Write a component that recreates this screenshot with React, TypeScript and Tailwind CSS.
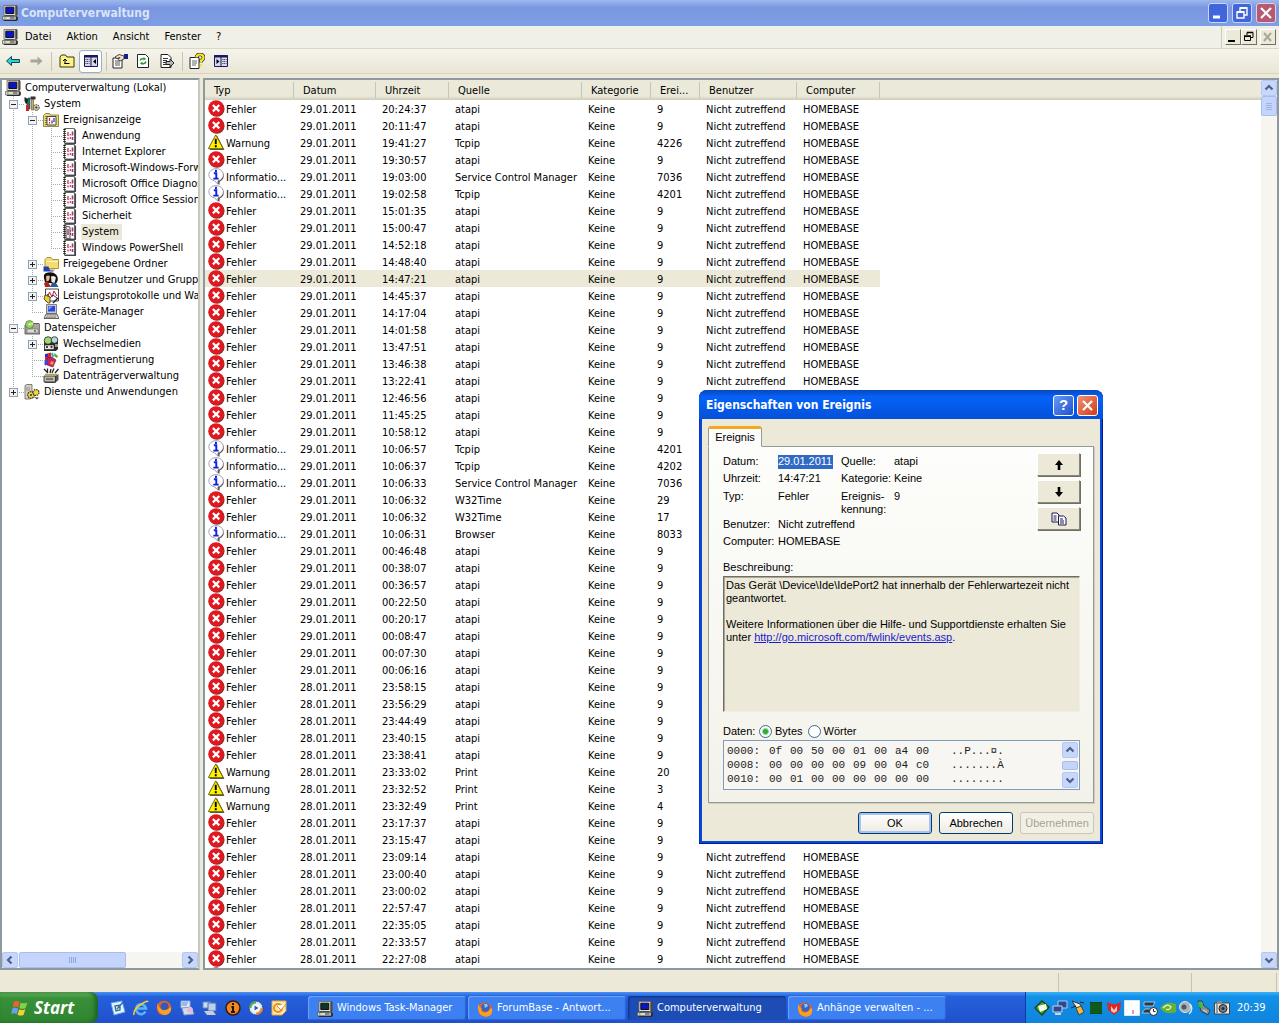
import { useState, type ReactNode } from "react";
import clsx from "clsx";

type Kind = "Fehler" | "Warnung" | "Information";

type EventRow = {
    kind: Kind;
    date: string;
    time: string;
    source: string;
    id: string;
};

const kinds: Record<string, Kind> = { F: "Fehler", W: "Warnung", I: "Information" };

// kind, time, source, id
const log29 = `F 20:24:37 atapi 9
F 20:11:47 atapi 9
W 19:41:27 Tcpip 4226
F 19:30:57 atapi 9
I 19:03:00 Service_Control_Manager 7036
I 19:02:58 Tcpip 4201
F 15:01:35 atapi 9
F 15:00:47 atapi 9
F 14:52:18 atapi 9
F 14:48:40 atapi 9
F 14:47:21 atapi 9
F 14:45:37 atapi 9
F 14:17:04 atapi 9
F 14:01:58 atapi 9
F 13:47:51 atapi 9
F 13:46:38 atapi 9
F 13:22:41 atapi 9
F 12:46:56 atapi 9
F 11:45:25 atapi 9
F 10:58:12 atapi 9
I 10:06:57 Tcpip 4201
I 10:06:37 Tcpip 4202
I 10:06:33 Service_Control_Manager 7036
F 10:06:32 W32Time 29
F 10:06:32 W32Time 17
I 10:06:31 Browser 8033
F 00:46:48 atapi 9
F 00:38:07 atapi 9
F 00:36:57 atapi 9
F 00:22:50 atapi 9
F 00:20:17 atapi 9
F 00:08:47 atapi 9
F 00:07:30 atapi 9
F 00:06:16 atapi 9`;

const log28 = `F 23:58:15 atapi 9
F 23:56:29 atapi 9
F 23:44:49 atapi 9
F 23:40:15 atapi 9
F 23:38:41 atapi 9
W 23:33:02 Print 20
W 23:32:52 Print 3
W 23:32:49 Print 4
F 23:17:37 atapi 9
F 23:15:47 atapi 9
F 23:09:14 atapi 9
F 23:00:40 atapi 9
F 23:00:02 atapi 9
F 22:57:47 atapi 9
F 22:35:05 atapi 9
F 22:33:57 atapi 9
F 22:27:08 atapi 9
F 22:25:51 atapi 9`;

const parse = (log: string, date: string): EventRow[] =>
    log.split("\n").map((line) => {
        const [k, time, source, id] = line.split(" ");
        return { kind: kinds[k], date, time, source: source.replace(/_/g, " "), id };
    });

const events = [...parse(log29, "29.01.2011"), ...parse(log28, "28.01.2011")];

/* ---------- icons ---------- */

const Pix = ({ children, className = "size-4" }: { children: ReactNode; className?: string }) => (
    <svg viewBox="0 0 16 16" className={clsx("block shrink-0", className)} aria-hidden="true">
        {children}
    </svg>
);

const ComputerIcon = ({ className, screen = "#0a14c8" }: { className?: string; screen?: string }) => (
    <Pix className={className}>
        <path d="M13 0h1.5l1 1v9l-1.5 1h-1z" fill="#4a483f" />
        <path d="M2 0.5h11.5v10h-11.5z" fill="#e0dcd0" stroke="#6a675c" strokeWidth="0.8" />
        <path d="M3.8 2.2h8v6.3h-8z" fill={screen} stroke="#111" strokeWidth="1" />
        <path d="M3 11h9" stroke="#222" />
        <path d="M14 11l1.8 1v3l-1.5 1h-12l-1-1h12.5z" fill="#222" />
        <path d="M0.5 11.5h13.5v3.3h-13.5z" fill="#dedacf" stroke="#555" strokeWidth="0.7" />
        <path d="M8 13h4.5" stroke="#333" />
        <path d="M2 13h1.5" stroke="#18a018" />
    </Pix>
);

const LaptopIcon = () => (
    <Pix>
        <path d="M3.5 0.5h10v9h-10z" fill="#c6c9d8" stroke="#666" strokeWidth="0.8" />
        <path d="M5 2h7v5.5h-7z" fill="#2848e0" />
        <path d="M5.5 2.5h4l-4 3.5z" fill="#8aa8ff" />
        <path d="M3 10h11l2 4.5h-15z" fill="#d4d0c4" stroke="#444" strokeWidth="0.8" />
        <path d="M4 12h9M3 13.5h10" stroke="#555" strokeWidth="0.7" strokeDasharray="1 .6" />
    </Pix>
);

const ToolsIcon = () => (
    <Pix>
        <path d="M0.5 1l3.5 2v4l-2 1-1.5-3z" fill="#222" />
        <path d="M4 2h2v11h-3v-6z" fill="#18806a" stroke="#111" strokeWidth="0.5" />
        <path d="M6.5 0.5h5v3h-5z" fill="#333" />
        <path d="M7.5 3.5h2v10.5h-2z" fill="#c8b060" stroke="#333" strokeWidth="0.5" />
        <path d="M2 9h3v6h-3z" fill="#d02020" />
        <circle cx="12.3" cy="11.5" r="3" fill="#c8c8a0" stroke="#444" strokeDasharray="1.4 .8" />
        <circle cx="12.3" cy="11.5" r="1" fill="#333" />
    </Pix>
);

const EventBookIcon = () => (
    <Pix>
        <path d="M0.5 3.5l2-2h4l1 1.5h8v11.5h-15z" fill="#e8dc78" stroke="#77702c" strokeWidth="0.8" />
        <path d="M4 4.5h9v8.5h-9z" fill="#fff" stroke="#333" strokeWidth="0.9" />
        <path d="M3 4v10" stroke="#222" strokeDasharray="1 1" />
        <path d="M6.5 6v3M6.5 10v1.5" stroke="#d02030" strokeWidth="1.2" />
        <path d="M9 8.5v3M11 6v4" stroke="#502090" strokeWidth="1.2" />
    </Pix>
);

const LogIcon = ({ open = false }: { open?: boolean }) => (
    <Pix>
        <path d="M2.5 0.5h10v14.5h-10z" fill="#fff" stroke="#555" strokeWidth="0.9" />
        <path d="M13.5 1.5v14h-11" stroke="#445" strokeWidth="1.1" fill="none" />
        <path d="M2.5 1v14" stroke="#222" strokeWidth="2.6" strokeDasharray="1 1" />
        <path d="M6 4v4M6 9.5v2" stroke="#e85060" strokeWidth="1.6" />
        <path d="M8.3 6v1.5M8.3 9v2" stroke="#a02060" strokeWidth="1" />
        <path d="M10.5 3.5v4M10.5 9v3" stroke="#904068" strokeWidth="1.6" />
        {open && <path d="M4 2l4 1v12l-4-1z" fill="#f6e4ec" stroke="#333" strokeWidth="0.8" />}
        {open && <path d="M6 5v6" stroke="#902050" strokeWidth="1.2" />}
    </Pix>
);

const FolderIcon = () => (
    <Pix>
        <path d="M2 3.5l2-2h4l1.5 2h6v9h-13.5z" fill="#f4dc74" stroke="#9a8020" strokeWidth="0.8" />
        <path d="M3 5.5h12" stroke="#fff6b8" />
        <path d="M0.5 10.5h5l1 3h4v2h-10z" fill="#2040b0" />
        <path d="M7 13h5v1.5h-5z" fill="#e8c8a0" />
    </Pix>
);

const UsersIcon = () => (
    <Pix>
        <path d="M1 6q-1-5 4-5.5 5-1 8 2 3 3 1 8l-3 1-9-1z" fill="#111" />
        <path d="M3 4.5q2-2 4 0l-1 4-2.5 1z" fill="#f0b890" />
        <path d="M8 4.5q3-1.5 5 1l-1.5 5.5-3-1z" fill="#fbe8dc" />
        <path d="M1 11l4-1 3 5h-6z" fill="#b02020" />
        <path d="M7 15l2-4 4 0 2.5 4z" fill="#285a98" />
    </Pix>
);

const PerfIcon = () => (
    <Pix>
        <path d="M2.5 1h13v12h-13z" fill="#fff" stroke="#333" strokeWidth="0.9" />
        <path d="M4 10l2.5-6 2.5 5 2-6 3 5" fill="none" stroke="#c02020" />
        <path d="M4 6l3 4 3-3 4 3" fill="none" stroke="#502080" />
        <path d="M2 7l5 2v6h-2l-4-4z" fill="#f0d020" stroke="#333" strokeWidth="0.8" />
        <path d="M10 15l5-5" stroke="#222" strokeWidth="1.5" />
    </Pix>
);

const StorageIcon = () => (
    <Pix>
        <path d="M1 5l2-1.5h12l1 1.5v9h-15z" fill="#a8a69c" stroke="#444" strokeWidth="0.8" />
        <path d="M3 9h11v4h-11z" fill="#dedbd0" stroke="#666" strokeWidth="0.6" />
        <circle cx="5.5" cy="4.5" r="4" fill="#8cd850" stroke="#557" strokeWidth="0.6" />
        <path d="M5.5 4.5l3-2.5 1 2.5z" fill="#f4f080" />
        <circle cx="5.5" cy="4.5" r="1" fill="#fff" />
        <path d="M10 11h2" stroke="#222" />
    </Pix>
);

const RemovableIcon = () => (
    <Pix>
        <path d="M1 5h14v8l-2 2h-12z" fill="#2a2a2a" />
        <circle cx="5" cy="4.5" r="3.8" fill="#a0d870" stroke="#222" strokeWidth="0.8" />
        <circle cx="11.5" cy="4" r="3.3" fill="#b8d8e0" stroke="#222" strokeWidth="0.8" />
        <path d="M1.5 9h9.5v4.5h-9.5z" fill="#e8e6dc" stroke="#222" strokeWidth="0.6" />
        <circle cx="4" cy="11" r="1.1" fill="#222" />
        <circle cx="8.5" cy="11" r="1.1" fill="#222" />
        <path d="M12 8h3v3h-3z" fill="#999" />
    </Pix>
);

const DefragIcon = () => (
    <Pix>
        <path d="M2 2l6-1.5v11l-6 2z" fill="#e02828" />
        <path d="M2 2h3v3h-3z" fill="#2830c8" />
        <path d="M4 6l5-1 4 3-3 7-6-2z" fill="#c82060" stroke="#701030" strokeWidth="0.6" />
        <path d="M8 1.5l2-1 1 4-2 1z" fill="#20b8c8" />
        <path d="M11.5 1l3.5 3-1 2-3-2z" fill="#58b030" />
        <path d="M1.5 8h3v5h-3z" fill="#3848e0" />
        <path d="M8 9l3 1-1 3-3-1z" fill="#f09048" />
    </Pix>
);

const DiskIcon = () => (
    <Pix>
        <path d="M2 8h10l3.5-2v6l-3.5 3h-10z" fill="#555" />
        <path d="M1 8h11.5v6h-11.5z" fill="#bbb8ac" stroke="#222" strokeWidth="0.8" />
        <path d="M3 11h7" stroke="#333" />
        <path d="M1 1l4 4M4.5 0.5v4.5M9 5l2-4.5M12 5l3.5-4M8 1l-1 4" stroke="#222" strokeWidth="1.3" />
        <path d="M2 6.5h12" stroke="#b0a050" strokeWidth="1.5" />
    </Pix>
);

const ServicesIcon = () => (
    <Pix>
        <path d="M1 1.5l2-1h5v13l-2 1.5h-5z" fill="#d4d0c4" stroke="#666" strokeWidth="0.8" />
        <path d="M2 4h4M2 6h4" stroke="#777" strokeWidth="0.7" />
        <circle cx="7" cy="11" r="3.3" fill="#f0d838" stroke="#333" strokeWidth="1.2" strokeDasharray="1.6 .7" />
        <circle cx="12" cy="8.5" r="3" fill="#f0d838" stroke="#333" strokeWidth="1.2" strokeDasharray="1.6 .7" />
        <circle cx="7" cy="11" r="1" fill="#333" />
        <path d="M10 13l3 2.5 2-2z" fill="#555" />
    </Pix>
);

const KindIcon = ({ kind }: { kind: Kind }) => {
    if (kind === "Fehler")
        return (
            <Pix className="size-[17px]">
                <circle cx="8.3" cy="8.5" r="7.3" fill="#7a3030" />
                <circle cx="7.6" cy="7.7" r="7.4" fill="#e01820" />
                <path d="M4.6 4.7l6 6M10.6 4.7l-6 6" stroke="#fff" strokeWidth="2.1" />
            </Pix>
        );
    if (kind === "Warnung")
        return (
            <Pix className="size-[17px]">
                <path d="M8.5 1.5l7 13.5h-14z" fill="#555" />
                <path d="M7.3 0.8l7 13h-14z" fill="#fff200" stroke="#6a6400" strokeWidth="0.9" strokeLinejoin="round" />
                <path d="M7.3 4.5v5" stroke="#000" strokeWidth="1.8" />
                <path d="M7.3 10.5v2" stroke="#000" strokeWidth="1.8" />
            </Pix>
        );
    return (
        <Pix className="size-[17px]">
            <path d="M9 1.3a6.8 6 0 0 1 2 11.3l-0.3 3.4-4.2-3.6z" fill="#484848" />
            <path d="M7.3 0.5a7 5.9 0 0 1 2 11.6v3l-3.3-3a7 5.9 0 0 1 1.3-11.6z" fill="#fff" stroke="#889" strokeWidth="0.7" />
            <path d="M7.5 1.7v2M5.5 5h2.3v4.7M5 10h5" stroke="#1020e0" strokeWidth="1.8" fill="none" />
        </Pix>
    );
};

const FirefoxIcon = () => (
    <Pix>
        <circle cx="8" cy="8.5" r="7" fill="#e8621c" />
        <circle cx="8.5" cy="6.5" r="4.3" fill="#3a62c8" />
        <path d="M1.5 2.5q0.5 4 3 4.5-1 4 3 4.5 4 0 5.5-4l2 0q1 6-3 7.5-5 2-9-2-3-4-1.5-10.5z" fill="#f8a020" />
        <path d="M7 3l3 0 1 2-3 2z" fill="#88c8f8" />
    </Pix>
);

/* ---------- scroll bar pieces ---------- */

const dirs = {
    up: "M4.5 9.5l3.5-3.5 3.5 3.5",
    down: "M4.5 6.5l3.5 3.5 3.5-3.5",
    left: "M9.5 4.5l-3.5 3.5 3.5 3.5",
    right: "M6.5 4.5l3.5 3.5-3.5 3.5",
};

const ScrollButton = ({ dir, label }: { dir: keyof typeof dirs; label: string }) => (
    <button
        aria-label={label}
        className="flex size-4 shrink-0 items-center justify-center rounded-xs border border-[#b4c8f6] bg-[#c8d6fb]"
    >
        <svg viewBox="0 0 16 16" className="size-4 shrink-0">
            <path d={dirs[dir]} fill="none" stroke="#4d6185" strokeWidth="2.2" />
        </svg>
    </button>
);

/* ---------- tree ---------- */

// one character per indent cell: | line, t tee, l corner, - open node, + closed node, e closed last node
type Node = { guides: string; text: string; icon: ReactNode; selected?: boolean };

const nodes: Node[] = [
    { guides: "", text: "Computerverwaltung (Lokal)", icon: <ComputerIcon /> },
    { guides: "-", text: "System", icon: <ToolsIcon /> },
    { guides: "|-", text: "Ereignisanzeige", icon: <EventBookIcon /> },
    { guides: "||t", text: "Anwendung", icon: <LogIcon /> },
    { guides: "||t", text: "Internet Explorer", icon: <LogIcon /> },
    { guides: "||t", text: "Microsoft-Windows-Forwarding", icon: <LogIcon /> },
    { guides: "||t", text: "Microsoft Office Diagnostics", icon: <LogIcon /> },
    { guides: "||t", text: "Microsoft Office Sessions", icon: <LogIcon /> },
    { guides: "||t", text: "Sicherheit", icon: <LogIcon /> },
    { guides: "||t", text: "System", icon: <LogIcon open />, selected: true },
    { guides: "||l", text: "Windows PowerShell", icon: <LogIcon /> },
    { guides: "|+", text: "Freigegebene Ordner", icon: <FolderIcon /> },
    { guides: "|+", text: "Lokale Benutzer und Gruppen", icon: <UsersIcon /> },
    { guides: "|+", text: "Leistungsprotokolle und Warnungen", icon: <PerfIcon /> },
    { guides: "|l", text: "Geräte-Manager", icon: <LaptopIcon /> },
    { guides: "-", text: "Datenspeicher", icon: <StorageIcon /> },
    { guides: "|+", text: "Wechselmedien", icon: <RemovableIcon /> },
    { guides: "|t", text: "Defragmentierung", icon: <DefragIcon /> },
    { guides: "|l", text: "Datenträgerverwaltung", icon: <DiskIcon /> },
    { guides: "e", text: "Dienste und Anwendungen", icon: <ServicesIcon /> },
];

const Guide = ({ type }: { type: string }) => {
    const box = "-+e".includes(type);
    const half = "le".includes(type);
    return (
        <svg viewBox="0 0 19 16" className="h-4 w-[19px] shrink-0" shapeRendering="crispEdges" aria-hidden="true">
            <path d={half ? "M8.5 0v8" : "M8.5 0v16"} stroke="#a8a8a8" strokeDasharray="1 1" />
            {type !== "|" && <path d="M8 8.5h11" stroke="#a8a8a8" strokeDasharray="1 1" />}
            {box && <path d="M4.5 4.5h8v8h-8z" fill="#f4f2ea" stroke="#8fa2bd" />}
            {box && <path d={type === "-" ? "M6 8.5h5" : "M6 8.5h5M8.5 6v5"} stroke="#222" />}
        </svg>
    );
};

const Tree = () => (
    <nav className="flex w-[200px] shrink-0 flex-col border-2 border-[#8c9a9f] border-r-[#c5c9c4] bg-white">
        <ul className="min-h-0 flex-1 overflow-hidden pl-[3px]">
            {nodes.map((node, i) => (
                <li key={i} className="flex h-4 items-center whitespace-nowrap">
                    {node.guides.split("").map((g, j) => (
                        <Guide key={j} type={g} />
                    ))}
                    {node.icon}
                    <button className={clsx("ml-[3px] h-4 pr-[3px] pl-px leading-4", node.selected && "bg-[#ece9d8]")}>{node.text}</button>
                </li>
            ))}
        </ul>
        <div className="flex h-4 shrink-0 bg-[#f6f5f0]">
            <ScrollButton dir="left" label="Nach links" />
            <div className="flex flex-1 px-px">
                <div className="flex w-[107px] items-center justify-center gap-px rounded-xs border border-[#a6bcf2] bg-[#c5d4fa]">
                    {[0, 1, 2, 3].map((n) => (
                        <span key={n} className="h-[6px] w-px border-r border-[#8ea6de]" />
                    ))}
                </div>
            </div>
            <ScrollButton dir="right" label="Nach rechts" />
        </div>
    </nav>
);

/* ---------- event list ---------- */

const columns = ["Typ", "Datum", "Uhrzeit", "Quelle", "Kategorie", "Erei...", "Benutzer", "Computer"];

const EventList = () => (
    <section className="flex min-w-0 flex-1 border-2 border-[#8c9a9f] bg-white">
        <div className="min-w-0 flex-1 overflow-hidden">
            <table className="w-full table-fixed border-collapse text-left">
                <colgroup>
                    <col className="w-[89px]" />
                    <col className="w-[82px]" />
                    <col className="w-[73px]" />
                    <col className="w-[133px]" />
                    <col className="w-[69px]" />
                    <col className="w-[49px]" />
                    <col className="w-[97px]" />
                    <col className="w-[83px]" />
                    <col />
                </colgroup>
                <thead>
                    <tr className="h-5 bg-linear-to-b from-[#ebe9da] from-80% to-[#d0ccb8]">
                        {columns.map((c) => (
                            <th key={c} className="p-0 font-normal">
                                <div className="h-4 border-r border-[#c9c5b2] pt-px pl-[9px] leading-4">{c}</div>
                            </th>
                        ))}
                        <td className="p-0" />
                    </tr>
                </thead>
                <tbody>
                    {events.map((e, i) => {
                        const bg = i === 10 && "bg-[#ece9d8]";
                        return (
                            <tr key={i} className="h-[17px]">
                                <td className={clsx("p-0", bg)}>
                                    <div className="flex h-[17px] items-start gap-px pl-[3px]">
                                        <KindIcon kind={e.kind} />
                                        <span className="h-[17px] leading-[19px]">
                                            {e.kind === "Information" ? "Informatio..." : e.kind}
                                        </span>
                                    </div>
                                </td>
                                {[e.date, e.time, e.source, "Keine", e.id, "Nicht zutreffend", "HOMEBASE"].map((text, j) => (
                                    <td key={j} className={clsx("p-0 pl-[6px] whitespace-nowrap", bg)}>
                                        <div className="h-[17px] leading-[19px]">{text}</div>
                                    </td>
                                ))}
                                <td className="p-0" />
                            </tr>
                        );
                    })}
                </tbody>
            </table>
        </div>
        <div className="flex w-4 shrink-0 flex-col bg-[#f6f5f0]">
            <ScrollButton dir="up" label="Nach oben" />
            <div className="flex-1">
                <div className="flex h-5 flex-col items-center justify-center gap-px rounded-xs border border-[#a6bcf2] bg-[#c5d4fa]">
                    {[0, 1, 2, 3].map((n) => (
                        <span key={n} className="h-px w-[6px] bg-[#9db2e6]" />
                    ))}
                </div>
            </div>
            <ScrollButton dir="down" label="Nach unten" />
        </div>
    </section>
);

/* ---------- window chrome ---------- */

const TitleBar = () => (
    <header className="flex h-[26px] shrink-0 items-center bg-linear-to-b from-[#9db9ee] via-[#7a96df] via-30% to-[#7d9fe6] pr-[3px] pl-[2px]">
        <ComputerIcon />
        <h1 className="ml-[3px] flex-1 text-[12px] font-bold text-[#d8e4f8]">Computerverwaltung</h1>
        <div className="flex gap-1">
            <button aria-label="Minimieren" className="size-5 rounded-[3px] border border-[#c9d8f8] bg-[#4166dc]">
                <svg viewBox="0 0 18 18"><path d="M4 13h7" stroke="#fff" strokeWidth="3" /></svg>
            </button>
            <button aria-label="Wiederherstellen" className="size-5 rounded-[3px] border border-[#c9d8f8] bg-[#4166dc]">
                <svg viewBox="0 0 18 18" fill="none" stroke="#fff"><path d="M4 8h7v6h-7zM7 7v-3h7v7h-3" strokeWidth="1.4" /><path d="M4 8h7M7 4h7" strokeWidth="2" /></svg>
            </button>
            <button aria-label="Schließen" className="size-5 rounded-[3px] border border-[#e6d0e0] bg-[#b65a72]">
                <svg viewBox="0 0 18 18"><path d="M4 4l10 10M14 4l-10 10" stroke="#fff" strokeWidth="2.2" /></svg>
            </button>
        </div>
    </header>
);

const mdi = "size-4 border border-white border-r-[#716f64] border-b-[#716f64] bg-[#ece9d8]";

const MenuBar = () => (
    <div className="flex h-[23px] shrink-0 items-center border-b border-[#dcd8c6] bg-[#f1f0e6] pr-[3px] pl-[2px]">
        <ComputerIcon />
        <div className="ml-[7px] flex flex-1 gap-[15px]">
            {["Datei", "Aktion", "Ansicht", "Fenster", "?"].map((m) => (
                <button key={m}>{m}</button>
            ))}
        </div>
        <div className="flex self-stretch items-center border-l border-[#d0ccba] pl-[3px]">
            <button aria-label="Fenster minimieren" className={mdi}>
                <svg viewBox="0 0 14 14"><path d="M2 11h7" stroke="#000" strokeWidth="2" /></svg>
            </button>
            <button aria-label="Fenster wiederherstellen" className={mdi}>
                <svg viewBox="0 0 14 14" fill="none" stroke="#000"><path d="M2.5 6.5h6v4h-6zM5 5v-2.5h6v5h-2" /><path d="M2 6h7M5 2.5h6" strokeWidth="1.6" /></svg>
            </button>
            <button aria-label="Fenster schließen" className={clsx("ml-[3px]", mdi)}>
                <svg viewBox="0 0 14 14"><path d="M3 3l7 8M10 3l-7 8" stroke="#aca899" strokeWidth="2" /></svg>
            </button>
        </div>
    </div>
);

const Sep = ({ className }: { className?: string }) => <span className={clsx("h-[19px] w-px bg-[#c8c4b2]", className)} />;

const ToolBar = () => (
    <div className="flex h-[25px] shrink-0 items-center border-b border-[#d8d4c2] bg-linear-to-b from-[#f5f4ec] to-[#e9e6d6] pl-[5px]">
        <button aria-label="Zurück" className="size-4">
            <Pix><path d="M1.5 8l5-4.500v3h8v3h-8v3z" fill="#30d0d8" stroke="#0a4a50" /></Pix>
        </button>
        <button aria-label="Vorwärts" className="ml-[7px] size-4">
            <Pix><path d="M14.5 8l-5-4.500v3h-7v3h7v3z" fill="#a8a69c" /></Pix>
        </button>
        <Sep className="ml-[7px]" />
        <button aria-label="Aufwärts" className="ml-[7px] size-4">
            <Pix>
                <path d="M1 4l1.5-2h4l1.5 2h7v10h-14z" fill="#fbf38a" stroke="#3a3608" />
                <path d="M5.5 10.5h5M6 11v-5M4 8l2-2 2 2" stroke="#000" fill="none" />
            </Pix>
        </button>
        <button aria-label="Konsolenstruktur" className="ml-[4px] flex size-[23px] items-center justify-center rounded-[3px] border border-[#98b0cc] bg-white">
            <Pix>
                <path d="M1.5 2.5h13v11h-13z" fill="#d8d8ec" stroke="#181860" />
                <path d="M1 3.5h14" stroke="#181860" strokeWidth="2" />
                <path d="M8 4v10" stroke="#181860" />
                <path d="M2.5 6.5h4M2.5 8.5h4M2.5 10.5h4" stroke="#333" strokeDasharray="1 .7" />
                <path d="M13 6v5l-3-2.5z" fill="#000" />
            </Pix>
        </button>
        <Sep className="ml-[4px]" />
        <button aria-label="Eigenschaften" className="ml-[5px] size-4">
            <Pix>
                <path d="M1 5h9v10h-9z" fill="#fff" stroke="#222" />
                <path d="M3 8h5M3 10h5M3 12h5" stroke="#555" />
                <path d="M3 4l4-2.5 5 1.5v3l-4 2-2-1.5 2-2-3 1z" fill="#f0e4c8" stroke="#222" strokeWidth="0.8" />
                <path d="M12 1h4v5h-4z" fill="#182080" />
            </Pix>
        </button>
        <button aria-label="Aktualisieren" className="ml-[7px] size-4">
            <Pix>
                <path d="M2.5 1.5h8l3 3v10h-11z" fill="#fff" stroke="#222" />
                <path d="M5 7.5q1-2.5 4-1.5M11 8.5q-1 3-4 2" stroke="#209030" strokeWidth="1.3" fill="none" />
                <path d="M8.5 4l2.5 2-2.5 1.5zM7.5 12l-2.5-1.5 2.5-2z" fill="#209030" />
            </Pix>
        </button>
        <button aria-label="Liste exportieren" className="ml-[8px] size-4">
            <Pix>
                <path d="M2 1.5h7l3 3v10h-10z" fill="#fff" stroke="#222" />
                <path d="M4 5.5h5M4 7.5h4M4 9.5h3M4 11.5h3" stroke="#333" />
                <path d="M7 8.5h4v-2.5l4 4-4 4v-2.5h-4z" fill="#b8b8b8" stroke="#222" />
            </Pix>
        </button>
        <Sep className="ml-[7px]" />
        <button aria-label="Hilfe" className="ml-[6px] size-4">
            <Pix>
                <path d="M1 4.5h9v11h-9z" fill="#fff" stroke="#222" />
                <path d="M3 8h5M3 10h5M3 12h4" stroke="#666" />
                <path d="M7.5 4.5q0-3 3.5-3t3.5 3q0 2-2.5 3v2" fill="none" stroke="#333" strokeWidth="3.6" />
                <path d="M7.5 4.5q0-3 3.5-3t3.5 3q0 2-2.5 3v2M12 11v2.5" fill="none" stroke="#f4e820" strokeWidth="2.2" />
            </Pix>
        </button>
        <button aria-label="Aktionsbereich" className="ml-[8px] size-4">
            <Pix>
                <path d="M1.5 2.5h13v11h-13z" fill="#d8d8ec" stroke="#181860" />
                <path d="M1 3.5h14" stroke="#181860" strokeWidth="2" />
                <path d="M8 4v10" stroke="#181860" />
                <path d="M9.5 6.5h4M9.5 8.5h4M9.5 10.5h4" stroke="#333" strokeDasharray="1 .7" />
                <path d="M3.5 6v5l3-2.5z" fill="#000" />
            </Pix>
        </button>
    </div>
);

/* ---------- event dialog ---------- */

const dump = [
    { addr: "0000:", bytes: "0f 00 50 00 01 00 a4 00", text: "..P...¤." },
    { addr: "0008:", bytes: "00 00 00 00 09 00 04 c0", text: ".......À" },
    { addr: "0010:", bytes: "00 01 00 00 00 00 00 00", text: "........" },
];

const sideButton =
    "flex h-[23px] w-[43px] items-center justify-center border border-white border-r-[#8a8775] border-b-[#8a8775] bg-[#ece9d8] shadow-[1px_1px_0_#716f64]";
const pushButton = "h-[22px] w-[74px] rounded-[3px] border border-[#003c74] bg-linear-to-b from-white to-[#edebe2]";
const radio =
    "size-[13px] appearance-none rounded-full border border-[#3a6a92] bg-white checked:bg-[radial-gradient(circle,#2fae2f_0_2px,#fff_4px)]";

const EventDialog = () => {
    const [mode, setMode] = useState("bytes");
    return (
        <div
            role="dialog"
            aria-labelledby="dlg-title"
            className="absolute top-[390px] left-[699px] w-[404px] rounded-t-lg bg-[#0a48dc] px-[3px] pb-[3px] font-['Liberation_Sans',Arial,sans-serif] text-[11px] shadow-[inset_-1px_-1px_0_#001c8c,inset_1px_0_0_#0831c0]"
        >
            <div className="-mx-[3px] flex h-[29px] items-center gap-[3px] rounded-t-lg bg-linear-to-b from-[#0848c0] via-[#0562f8] via-25% to-[#0450d8] pt-px pr-[5px] pl-[7px]">
                <h2 id="dlg-title" className="flex-1 font-['DejaVu_Sans_Condensed','DejaVu_Sans',sans-serif] text-[12px] font-bold text-white">
                    Eigenschaften von Ereignis
                </h2>
                <button aria-label="Hilfe" className="size-[21px] rounded-[3px] border border-white bg-linear-to-br from-[#6a98f4] to-[#1c50d0] text-[15px] leading-[18px] font-bold text-white">
                    ?
                </button>
                <button aria-label="Schließen" className="size-[21px] rounded-[3px] border border-white bg-linear-to-br from-[#f09070] to-[#d03810]">
                    <svg viewBox="0 0 19 19"><path d="M5 5l9 9M14 5l-9 9" stroke="#fff" strokeWidth="2.2" /></svg>
                </button>
            </div>
            <div className="bg-[#ece9d8] px-[6px] pt-[7px] pb-[7px]">
                <button role="tab" aria-selected="true" className="relative -mb-px block h-[21px] w-[54px] rounded-t-[3px] border border-t-[3px] border-[#919b9c] border-t-[#f5a623] border-b-transparent bg-[#fcfcfa] leading-[13px]">
                    Ereignis
                </button>
                <div className="border border-[#919b9c] bg-linear-to-b from-[#fdfdfb] to-[#f3f2ea] pt-[6px] pr-[13px] pb-[12px] pl-[14px] shadow-[1px_1px_0_#d0ccbc]">
                    <div className="flex">
                        <div className="flex-1">
                            <div className="grid grid-cols-[55px_63px_53px_1fr] leading-[17px]">
                                <label htmlFor="datum">Datum:</label>
                                <input
                                    id="datum"
                                    readOnly
                                    defaultValue="29.01.2011"
                                    className="h-[14px] w-[55px] self-center bg-[#316ac5] text-white outline-none"
                                />
                                <span>Quelle:</span>
                                <span>atapi</span>
                                <span>Uhrzeit:</span>
                                <span>14:47:21</span>
                                <span>Kategorie:</span>
                                <span>Keine</span>
                                <span className="leading-[19px]">Typ:</span>
                                <span className="leading-[19px]">Fehler</span>
                                <span className="pt-[3px] leading-[13px]">Ereignis-<br />kennung:</span>
                                <span className="leading-[19px]">9</span>
                            </div>
                            <div className="grid grid-cols-[55px_1fr] leading-[17px]">
                                <span>Benutzer:</span>
                                <span>Nicht zutreffend</span>
                                <span>Computer:</span>
                                <span>HOMEBASE</span>
                            </div>
                        </div>
                        <div className="flex flex-col gap-1">
                            <button aria-label="Vorheriges Ereignis" className={sideButton}>
                                <Pix><path d="M8 3l4 5h-2.700v5h-2.600v-5h-2.700z" /></Pix>
                            </button>
                            <button aria-label="Nächstes Ereignis" className={sideButton}>
                                <Pix><path d="M8 13l4-5h-2.700v-5h-2.600v5h-2.700z" /></Pix>
                            </button>
                            <button aria-label="Kopieren" className={sideButton}>
                                <Pix>
                                    <path d="M1 2h5l2 2v7h-7z" fill="#fff" stroke="#181850" />
                                    <path d="M7.5 5h5l2.5 2v7h-7.500z" fill="#fff" stroke="#181850" />
                                    <path d="M2.5 5h3M2.5 7h3M2.5 9h3M9 8h3M9 10h4M9 12h4" stroke="#181850" />
                                </Pix>
                            </button>
                        </div>
                    </div>
                    <div className="mt-[9px] leading-[17px]">Beschreibung:</div>
                    <div className="h-[136px] border border-t-[#716f64] border-r-[#f1efe2] border-b-[#f1efe2] border-l-[#716f64] bg-[#ece9d8] px-[2px] pt-[2px] leading-[13px] shadow-[inset_1px_1px_0_#aca899]">
                        <p>Das Gerät \Device\Ide\IdePort2 hat innerhalb der Fehlerwartezeit nicht geantwortet.</p>
                        <p className="mt-[13px]">
                            Weitere Informationen über die Hilfe- und Supportdienste erhalten Sie unter{" "}
                            <a href="#events" className="text-[#1a1ad0] underline">http://go.microsoft.com/fwlink/events.asp</a>.
                        </p>
                    </div>
                    <fieldset className="mt-[10px] flex h-[18px] items-center">
                        <span className="w-[36px]">Daten:</span>
                        <label className="flex items-center gap-[3px]">
                            <input type="radio" name="mode" className={radio} checked={mode === "bytes"} onChange={() => setMode("bytes")} />
                            Bytes
                        </label>
                        <label className="ml-[5px] flex items-center gap-[3px]">
                            <input type="radio" name="mode" className={radio} checked={mode === "words"} onChange={() => setMode("words")} />
                            Wörter
                        </label>
                    </fieldset>
                    <div className="flex h-[50px] border border-[#7f9db9] bg-[#f7f6f2] pr-px pl-[3px]">
                        <div className="flex-1 pt-[3px]">
                            <table className="border-collapse text-left font-['Liberation_Mono',monospace] text-[11px] leading-[14px] text-[#222]">
                                <tbody>
                                    {dump.map((row) => (
                                        <tr key={row.addr}>
                                            <td className="w-[42px] p-0">{row.addr}</td>
                                            {row.bytes.split(" ").map((b, i) => (
                                                <td key={i} className="w-[21px] p-0">{b}</td>
                                            ))}
                                            <td className="p-0 pl-[14px]">{row.text}</td>
                                        </tr>
                                    ))}
                                </tbody>
                            </table>
                        </div>
                        <div className="flex flex-col justify-between py-px">
                            <ScrollButton dir="up" label="Daten nach oben" />
                            <span className="h-[9px] rounded-xs border border-[#a6bcf2] bg-[#c5d4fa]" />
                            <ScrollButton dir="down" label="Daten nach unten" />
                        </div>
                    </div>
                </div>
                <div className="mt-[9px] flex justify-end gap-[7px]">
                    <button className={clsx(pushButton, "shadow-[inset_0_0_0_2px_#a8c4ee]")}>OK</button>
                    <button className={pushButton}>Abbrechen</button>
                    <button disabled className="h-[22px] w-[74px] rounded-[3px] border border-[#c9c7ba] bg-[#f2f0e6] text-[#a5a292]">
                        Übernehmen
                    </button>
                </div>
            </div>
        </div>
    );
};

/* ---------- task bar ---------- */

const quick: { label: string; art: ReactNode }[] = [
    { label: "Desktop anzeigen", art: <><path d="M1 3l11-2 3 11-11 3z" fill="#e8f4fc" stroke="#60a8e0" /><path d="M5 6l5-1v5l-4 1zM13 2l-6 7" fill="none" stroke="#3070a8" strokeWidth="1.4" /></> },
    { label: "Internet Explorer", art: <><path d="M12.5 11.5a5 5 0 1 1 .5-3h-9" fill="none" stroke="#58b4f8" strokeWidth="2.5" /><path d="M1 15q-1-5 6-10t8-3" fill="none" stroke="#f4c830" strokeWidth="1.6" /></> },
    { label: "Firefox", art: <><circle cx="8" cy="8" r="7.3" fill="#e8621c" /><circle cx="8.5" cy="6.5" r="4" fill="#3858b8" /><path d="M1 3q1 4 3 5 3 4 8 1l3-2q1 6-5 8-9 0-9-12z" fill="#f8a028" /></> },
    { label: "Outlook Express", art: <><path d="M2 1h9v7h-9z" fill="#e4ecf8" stroke="#90a8d0" /><path d="M3 8l9-1 3 7-10 1z" fill="#d4dcf0" stroke="#8898c8" /><circle cx="11" cy="10" r="3" fill="#e8b8d8" /><path d="M3 3h6M3 5h5" stroke="#4888c8" /></> },
    { label: "Netzwerk", art: <><path d="M1 2h8v6h-8z" fill="#c8dcf8" stroke="#6888b8" /><path d="M6 3h8v8h-8z" fill="#b8d0f4" stroke="#5070a0" /><path d="M2 11l9 0 3 4h-9z" fill="#c8ccd8" /></> },
    { label: "Info", art: <><circle cx="8" cy="8" r="7" fill="#f08820" stroke="#401808" strokeWidth="1.5" /><path d="M8 3v2M6.5 7h1.5v5M6 12h4" stroke="#201008" strokeWidth="2" fill="none" /></> },
    { label: "Media Player", art: <><circle cx="8" cy="8" r="7" fill="#d8e4f0" stroke="#2050b0" /><path d="M8 1a7 7 0 0 0-7 7h7z" fill="#58a858" /><path d="M15 8a7 7 0 0 1-7 7v-7z" fill="#e88830" /><circle cx="8" cy="8" r="4.5" fill="#f4f8fc" /><path d="M6.5 5.5l4 2.5-4 2.5z" fill="#2858c0" /></> },
    { label: "Outlook", art: <><path d="M1 1h14v10l-4 4h-10z" fill="#fbe8b0" stroke="#e8a838" /><circle cx="7" cy="8" r="4" fill="none" stroke="#e89018" strokeWidth="2" /><path d="M6 6l4 4 5-6" fill="#fff" stroke="#d88828" /></> },
];

const tray: ReactNode[] = [
    <><path d="M1 8l7-7 7 6-7 8z" fill="#48a838" stroke="#184810" strokeWidth="1.4" /><path d="M4 6l8-2 1 5-7 3z" fill="#f8fcf0" /></>,
    <><path d="M6 1h9v7h-9z" fill="#284898" stroke="#b8c8e0" /><path d="M1 6h9v6h-9z" fill="#304890" stroke="#c8d4e8" /><path d="M3 14h6" stroke="#c8d4e8" strokeWidth="2" /></>,
    <><path d="M2 1l8 3 2 4-4 2z" fill="#f0f0e8" stroke="#333" /><path d="M6 8l5-2 3 6-5 3z" fill="#f0b850" stroke="#504020" /><path d="M1 8l5-2M10 2l4 1" stroke="#222" /></>,
    <><path d="M2 2h12v12h-12z" fill="#0a4a18" /><path d="M2 4h12M2 6h12M2 8h12M2 10h12M2 12h12" stroke="#1c8030" strokeWidth="0.6" /></>,
    <><path d="M1 2l5 2h4l5-2-1 8-6 5-6-5z" fill="#d82828" /><path d="M5 6l3 4 3-4 0 5-3 2-3-2z" fill="#f8c8b8" /></>,
    <><path d="M0.5 0.5h15v15h-15z" fill="#fff" stroke="#d8e8f8" /><path d="M9 10v4" stroke="#d83060" /></>,
    <><path d="M2 2h11l-2 4h-9zM3 9h10l-3 4h-10z" fill="#283848" stroke="#c0d8e8" strokeWidth="0.8" /><circle cx="11.5" cy="11.5" r="4" fill="#fff" stroke="#222" /><path d="M11.5 9v2.5h2" stroke="#222" fill="none" /></>,
    <><path d="M0 8q6-8 16-4v8q-10 4-16-4z" fill="#68b030" /><path d="M3 8q4-5 8-1-2 4-5 2" fill="none" stroke="#e0f4c8" strokeWidth="1.3" /></>,
    <><circle cx="7" cy="7" r="5.5" fill="#a8b0b8" stroke="#e0e4e8" /><circle cx="6" cy="7" r="2.5" fill="#505860" /><path d="M12 4q4 5-1 10" fill="none" stroke="#d8e8f8" strokeWidth="1.4" /></>,
    <><path d="M2 1l4 0 2 5 6 4-2 5-7-4z" fill="#889098" stroke="#384048" /><path d="M2 2l5 1 0 5-4-1z" fill="#38c040" /><path d="M7 10l4 2" stroke="#d8e0e8" /></>,
    <><path d="M0.5 3h15v11h-15z" fill="#e4e4e0" stroke="#444" /><path d="M3 1h5v2h-5z" fill="#888" /><circle cx="9" cy="8.5" r="4" fill="#708090" stroke="#222" /><circle cx="9" cy="8.5" r="1.5" fill="#203040" /><path d="M3 4v9" stroke="#555" /></>,
];

const tasks = [
    { title: "Windows Task-Manager", icon: <ComputerIcon screen="#0a3820" /> },
    { title: "ForumBase - Antwort...", icon: <FirefoxIcon /> },
    { title: "Computerverwaltung", icon: <ComputerIcon />, active: true },
    { title: "Anhänge verwalten - ...", icon: <FirefoxIcon /> },
];

const TaskBar = () => (
    <footer className="flex h-[31px] shrink-0 bg-linear-to-b from-[#4a90f4] via-[#2560dc] via-15% to-[#2050cc]">
        <button className="flex w-[98px] items-center gap-[5px] rounded-r-[8px] bg-linear-to-b from-[#6cb868] via-[#389038] via-20% to-[#2f8430] pl-[11px] text-[17px] font-bold text-white italic shadow-[inset_-3px_0_4px_#1c6420]">
            <Pix className="size-[18px]">
                <path d="M2.5 2.5q2.5-1.5 5 0l-1 5q-2.5-1.5-5 0z" fill="#f06030" />
                <path d="M8.5 3q2.5 1.5 6 0l-1.5 5q-2.5 1.5-5.5 0z" fill="#88d048" />
                <path d="M1.2 8.5q2.5-1.5 5 0l-1 5q-2.5-1.5-5 0z" fill="#68a0f8" />
                <path d="M7.2 9q2.5 1.5 5.5 0l-1.5 5q-2.5 1.5-5.3 0z" fill="#f8d030" />
            </Pix>
            <span className="font-['Open_Sans',sans-serif]">Start</span>
        </button>
        <div className="ml-[12px] flex w-[198px] items-center gap-[7px]">
            {quick.map((q) => (
                <button key={q.label} aria-label={q.label}>
                    <Pix>{q.art}</Pix>
                </button>
            ))}
        </div>
        <div className="flex min-w-0 flex-1 gap-[2px] pt-[4px] pb-[3px]">
            {tasks.map((t) => (
                <button
                    key={t.title}
                    className={clsx(
                        "flex w-[158px] items-center gap-[4px] rounded-[3px] pt-px pl-[9px] text-left whitespace-nowrap text-white",
                        t.active
                            ? "bg-[#1c4cb4] shadow-[inset_1px_1px_2px_#103080]"
                            : "bg-[#3c80f2] shadow-[inset_1px_1px_1px_#6ca4fc,inset_-1px_-1px_1px_#2c64d4]",
                    )}
                >
                    {t.icon}
                    {t.title}
                </button>
            ))}
        </div>
        <div className="flex w-[254px] items-center gap-[2px] border-l border-[#0c3c9c] bg-linear-to-b from-[#38b0f8] via-[#1290e8] via-15% to-[#1084dc] pt-px pl-[8px] text-white">
            {tray.map((art, i) => (
                <Pix key={i}>{art}</Pix>
            ))}
            <time className="ml-[5px]">20:39</time>
        </div>
    </footer>
);

export default function App() {
    return (
        <div className="relative flex h-screen flex-col overflow-hidden bg-[#ece9d8] font-['DejaVu_Sans_Condensed','DejaVu_Sans',sans-serif] text-[11px] text-black">
            <TitleBar />
            <MenuBar />
            <ToolBar />
            <main className="mt-1 flex min-h-0 flex-1 gap-[3px]">
                <Tree />
                <EventList />
            </main>
            <div className="flex h-[22px] shrink-0 pt-[3px] pr-[2px]">
                <div className="flex-1 border-r border-[#c8c4b2]" />
                <div className="w-[133px] border-r border-[#c8c4b2]" />
                <div className="w-[85px] border-r border-[#c8c4b2]" />
            </div>
            <TaskBar />
            <EventDialog />
        </div>
    );
}
